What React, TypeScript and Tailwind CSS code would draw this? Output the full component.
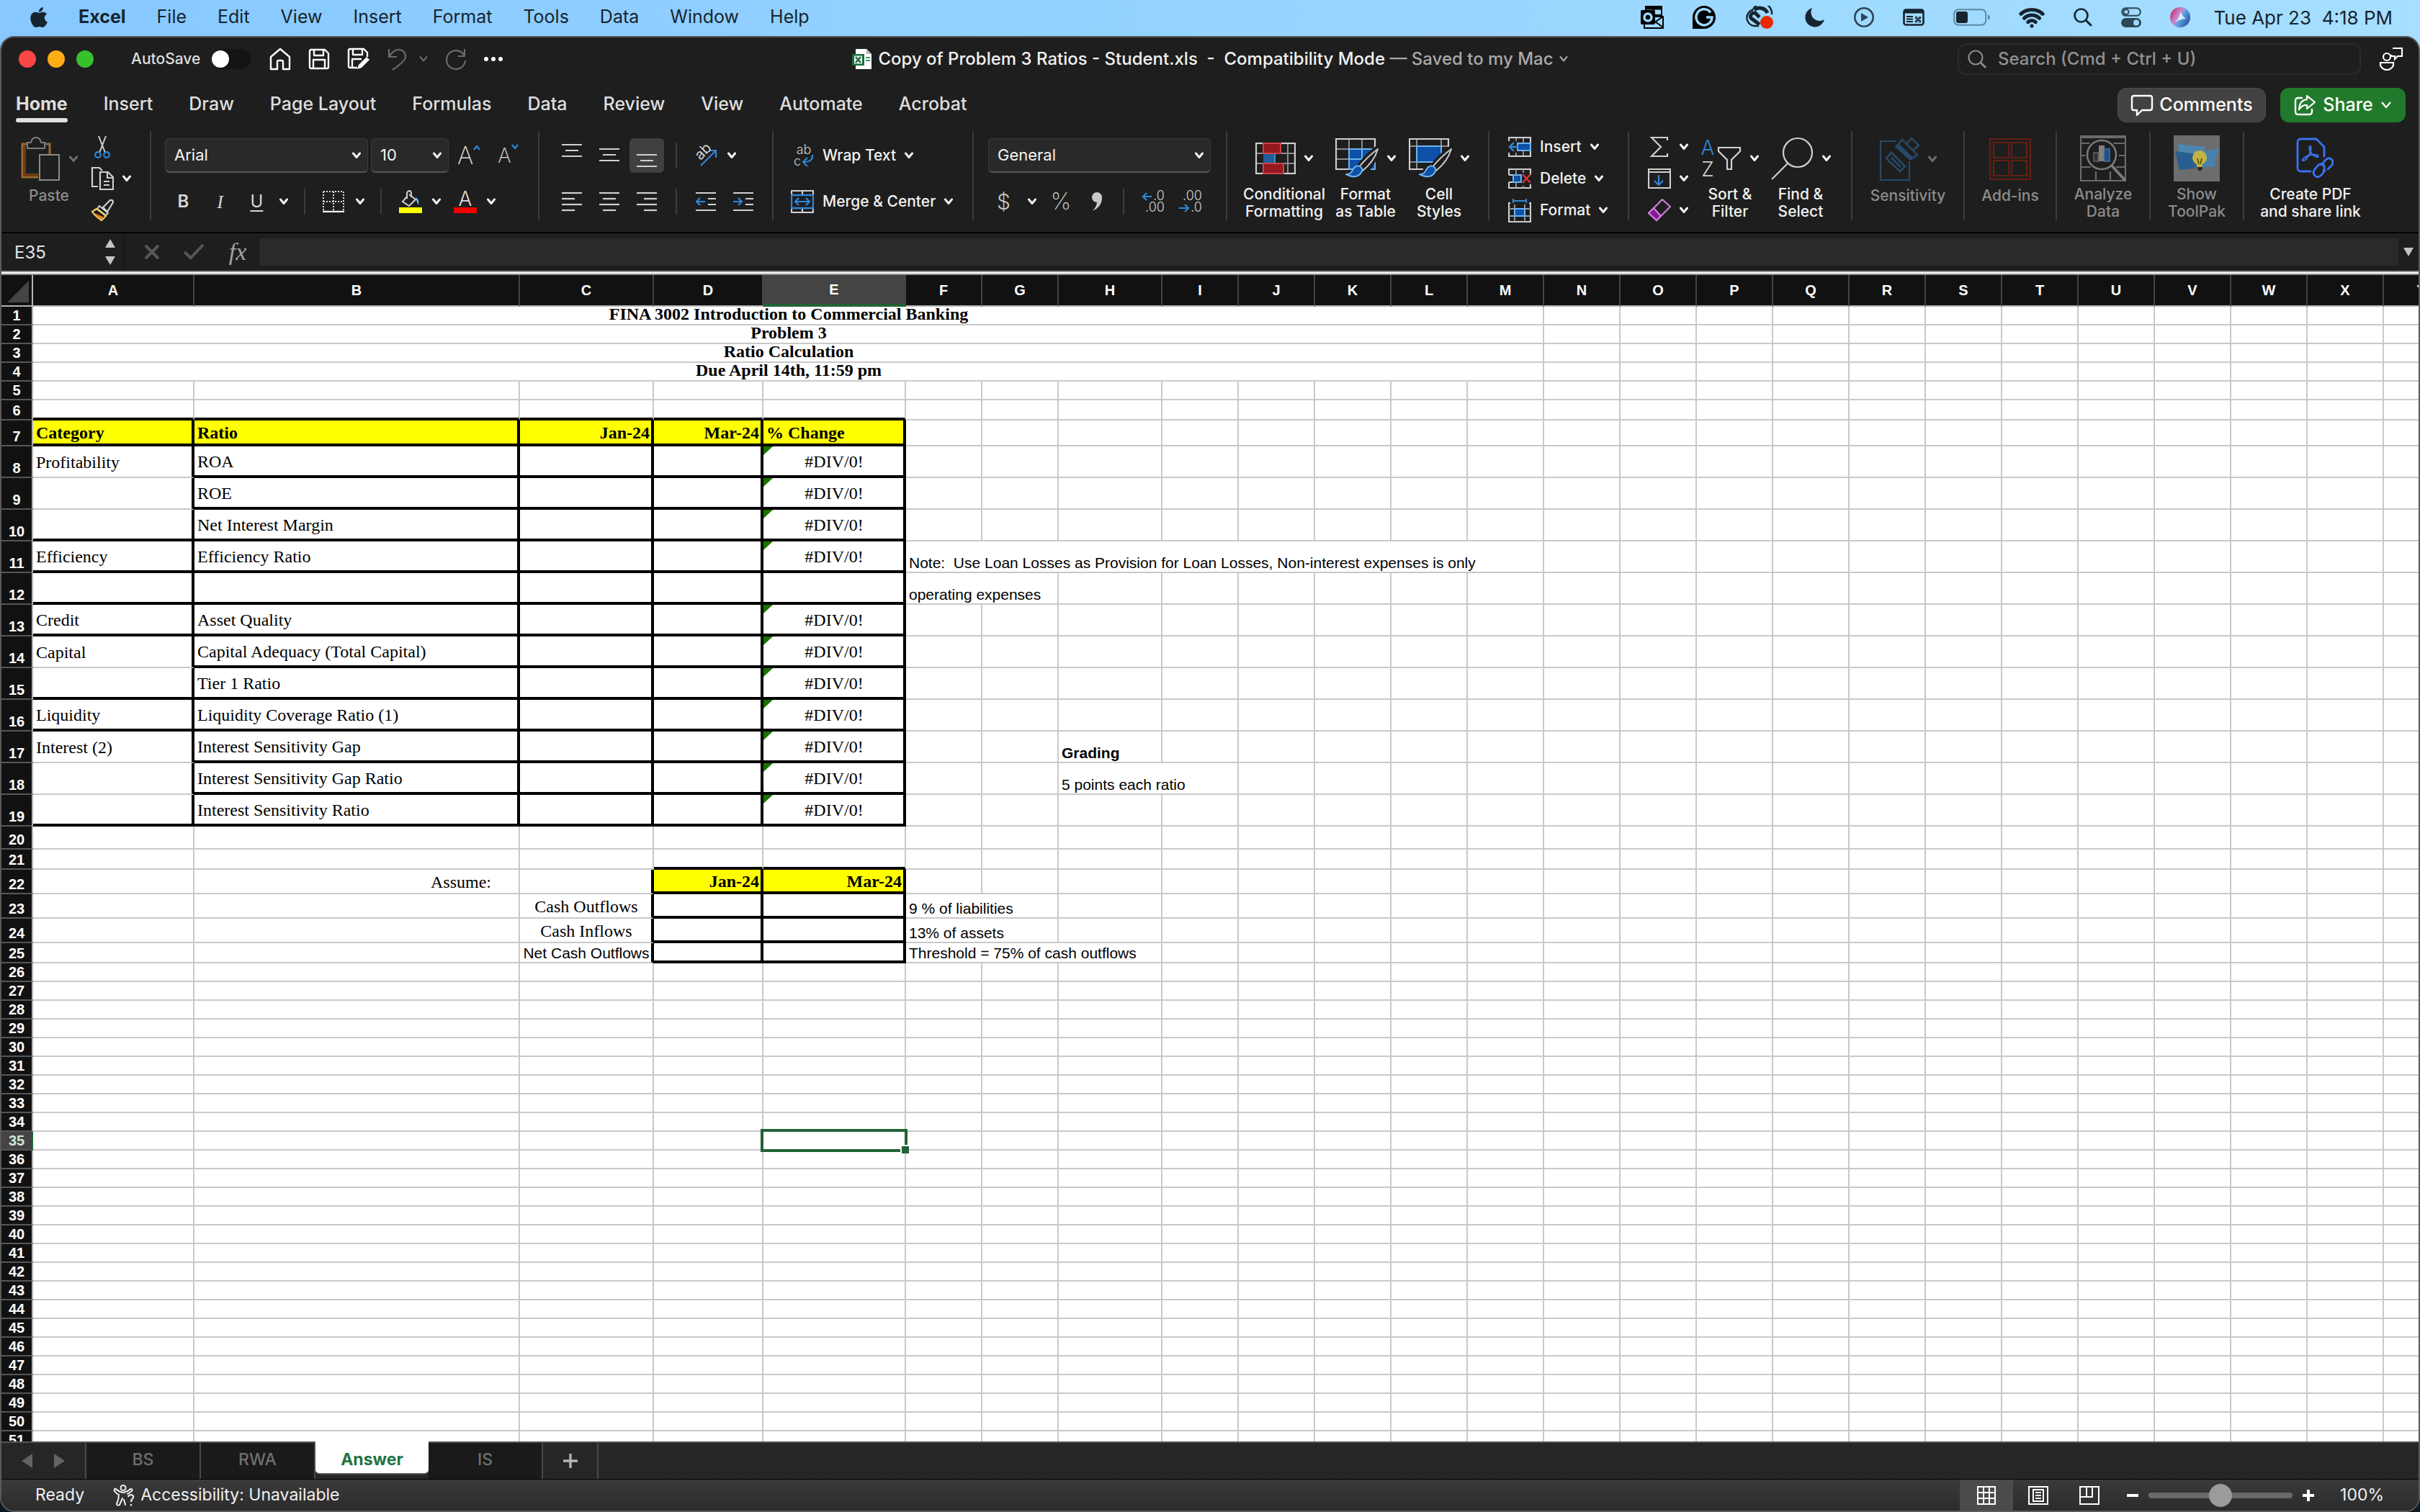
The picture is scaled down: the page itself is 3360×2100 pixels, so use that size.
import React from "react";
import { FaApple } from "react-icons/fa";
import { Command, Wifi } from "lucide-react";

type Kids = { children?: React.ReactNode };

const LIGHT = "#d0d0d0";
const BLUE = "#2f87d8";

function Svg({ w, h, children }: { w: number; h: number } & Kids) {
  return (
    <svg width={w} height={h} viewBox={`0 0 ${w} ${h}`} fill="none" aria-hidden="true" className="shrink-0">
      {children}
    </svg>
  );
}

function Chevron({ color = "#f2f2f2", thin = false }: { color?: string; thin?: boolean }) {
  return (
    <Svg w={12} h={10}>
      <path d="M1.5 2 L6 7.5 L10.5 2" stroke={color} strokeWidth={thin ? 2 : 3} strokeLinecap="round" strokeLinejoin="round" />
    </Svg>
  );
}

/* ---------- menu bar ---------- */

const menus = ["File", "Edit", "View", "Insert", "Format", "Tools", "Data", "Window", "Help"];

function MenuBar() {
  return (
    <header className="flex h-12 shrink-0 items-center justify-between px-[38px] text-[#16242f]">
      <nav className="flex items-center gap-[43px] text-[25px]">
        <button aria-label="Apple menu" className="-mr-1">
          <FaApple size={32} />
        </button>
        <button className="font-bold">Excel</button>
        {menus.map((m) => (
          <button key={m}>{m}</button>
        ))}
      </nav>
      <div className="flex items-center gap-10">
        <Svg w={32} h={32}>
          <rect x="7" y="1" width="22" height="22" stroke="#000" strokeWidth="2" />
          <path d="M7 3.5 H29" stroke="#000" strokeWidth="4" />
          <path d="M18 4 V22 M18 13 H29" stroke="#000" strokeWidth="2" />
          <path d="M5 15 L31 15 V31 H5 Z" fill="#9dd8ff" stroke="#000" strokeWidth="2" />
          <path d="M31 15 L18 24 M20 22 L31 30" stroke="#000" strokeWidth="2" />
          <rect x="0" y="6" width="20" height="20" rx="2" fill="#000" />
          <circle cx="10" cy="16" r="5" stroke="#9dd8ff" strokeWidth="3.5" />
        </Svg>
        <Svg w={32} h={32}>
          <path d="M16 0 A16 16 0 1 1 16 32 H0 V16 A16 16 0 0 1 16 0 Z" fill="#000" />
          <path d="M25 9.5 A11 11 0 1 0 27 16 H19 M26.5 16 V21" stroke="#9dd8ff" strokeWidth="3.5" />
        </Svg>
        <Svg w={42} h={32}>
          <path d="M20 28 H13 A11.5 11.5 0 0 1 12 5.5 M12 5.5 A13.5 13.5 0 0 1 38 12" stroke="#16242f" strokeWidth="2.4" />
          <path d="M21 26 L9 17 A5 5 0 0 1 15 10 L21 16 M14 5.5 A12 12 0 0 1 32 10" stroke="#16242f" strokeWidth="5" />
          <circle cx="31" cy="23" r="9" fill="#e92a00" />
        </Svg>
        <Svg w={30} h={30}>
          <path d="M12 2 A13.5 13.5 0 1 0 29 18 A12 12 0 0 1 12 2 Z" fill="#16242f" />
        </Svg>
        <Svg w={28} h={28}>
          <circle cx="14" cy="14" r="12.7" stroke="#2c4658" strokeWidth="2.6" />
          <path d="M10 8 L20 14 L10 20 Z" fill="#2c4658" />
        </Svg>
        <span className="relative flex">
          <Svg w={30} h={24}>
            <rect x="1.5" y="1.5" width="27" height="21" rx="3" stroke="#16242f" strokeWidth="2.6" />
            <path d="M1 4 H29" stroke="#16242f" strokeWidth="5" />
            <path d="M5 11 H14 M5 14.5 H14 M5 18 H14" stroke="#16242f" strokeWidth="1.8" />
          </Svg>
          <Command size={10} strokeWidth={3} className="absolute right-1 bottom-1" />
        </span>
        <Svg w={51} h={24}>
          <rect x="1.2" y="1.2" width="44" height="21.6" rx="6" stroke="#5b87a3" strokeWidth="2" />
          <rect x="4" y="4" width="16" height="16" rx="3" fill="#16242f" />
          <path d="M48 8 Q51 9.500 51 12 Q51 14.500 48 16 Z" fill="#5b87a3" />
        </Svg>
        <Wifi size={36} strokeWidth={3.4} />
        <Svg w={26} h={26}>
          <circle cx="10.5" cy="10.5" r="9" stroke="#16242f" strokeWidth="2.6" />
          <path d="M17 17 L24 24" stroke="#16242f" strokeWidth="3" strokeLinecap="round" />
        </Svg>
        <Svg w={28} h={28}>
          <rect x="1.2" y="1.2" width="25.6" height="10.6" rx="5.3" stroke="#2c4658" strokeWidth="2" />
          <circle cx="7" cy="6.5" r="3.5" stroke="#2c4658" strokeWidth="2" />
          <rect x="0" y="15" width="28" height="13" rx="6.5" fill="#2c4658" />
          <circle cx="21" cy="21.5" r="4" fill="#9dd8ff" />
        </Svg>
        <svg width="28" height="28" viewBox="0 0 28 28" aria-hidden="true">
          <defs>
            <linearGradient id="siri" x1="0" y1="0.2" x2="1" y2="0.8">
              <stop offset="0" stopColor="#c2306f" />
              <stop offset="0.4" stopColor="#c98ad0" />
              <stop offset="0.6" stopColor="#4aa0dd" />
              <stop offset="1" stopColor="#3a3f8e" />
            </linearGradient>
          </defs>
          <circle cx="14" cy="14" r="14" fill="url(#siri)" />
          <path d="M7 21 Q13 14 15 6 Q17 13 22 16 Q15 16 7 21 Z" fill="#e8f6ff" opacity="0.85" />
        </svg>
        <time className="-ml-2 text-[26px] whitespace-pre">Tue Apr 23  4:18 PM</time>
      </div>
    </header>
  );
}

/* ---------- title bar ---------- */

function TitleBar() {
  return (
    <div className="grid h-[60px] shrink-0 grid-cols-[1fr_auto_1fr] items-center">
      <div className="flex items-center pl-6">
        <div className="flex gap-4">
          <button aria-label="Close" className="size-6 rounded-full bg-[#fb4646]" />
          <button aria-label="Minimize" className="size-6 rounded-full bg-[#fdae15]" />
          <button aria-label="Full screen" className="size-6 rounded-full bg-[#36c22b]" />
        </div>
        <label className="ml-[52px] flex items-center gap-4 text-[21px] font-medium text-[#dcdcdc]">
          AutoSave
          <input
            type="checkbox"
            role="switch"
            className="h-7 w-[54px] appearance-none rounded-full bg-[#141414] before:block before:size-6 before:translate-y-0.5 before:rounded-full before:bg-white"
          />
        </label>
        <div className="ml-[26px] flex items-center gap-6">
          <button aria-label="Home">
            <Svg w={30} h={32}>
              <path d="M2 13 L15 2 L28 13 V30 H19 V20 Q19 18 17 18 H13 Q11 18 11 20 V30 H2 Z" stroke="#fff" strokeWidth="2.4" strokeLinejoin="round" />
            </Svg>
          </button>
          <button aria-label="Save">
            <Svg w={30} h={30}>
              <path d="M2 4 Q2 2 4 2 H23 L28 7 V26 Q28 28 26 28 H4 Q2 28 2 26 Z M8 2 V10 H21 V2 M7 28 V16 H23 V28" stroke="#fff" strokeWidth="2.4" strokeLinejoin="round" />
            </Svg>
          </button>
          <button aria-label="Save as">
            <Svg w={32} h={32}>
              <path d="M14 28 H4 Q2 28 2 26 V4 Q2 2 4 2 H23 L28 7 V13 M8 2 V10 H21 V2 M7 28 V16 H20" stroke="#fff" strokeWidth="2.4" strokeLinejoin="round" />
              <path d="M14 30 L16 24 L27 13 L31 17 L20 28 Z" fill="#fff" />
            </Svg>
          </button>
          <button aria-label="Undo" className="flex items-center gap-4">
            <Svg w={28} h={32}>
              <path d="M2 2 V13 H13 M2 13 Q9 2 17 3 Q26 5 25 14 Q23 20 7 31" stroke="#6a6a6a" strokeWidth="2.2" />
            </Svg>
            <Chevron color="#6a6a6a" thin />
          </button>
          <button aria-label="Redo">
            <Svg w={30} h={32}>
              <path d="M27 2 V12 H18 M27 12 A13 13 0 1 0 28 18" stroke="#6a6a6a" strokeWidth="2.2" />
            </Svg>
          </button>
          <button aria-label="More" className="flex gap-1">
            <span className="size-1.5 rounded-full bg-white" />
            <span className="size-1.5 rounded-full bg-white" />
            <span className="size-1.5 rounded-full bg-white" />
          </button>
        </div>
      </div>
      <div className="flex items-center text-2xl font-medium text-[#f1f1f1]">
        <Svg w={28} h={30}>
          <path d="M5 1 H20 L27 8 V29 H5 Z" fill="#fff" />
          <path d="M20 1 V8 H27 Z" fill="#bbb" />
          <path d="M19 13 H25 M19 17 H25" stroke="#2f9e5b" strokeWidth="2" />
          <rect x="0" y="8" width="17" height="16" fill="#1d6b3d" />
          <rect x="3" y="10.5" width="11" height="11" fill="#e6f3ea" />
          <path d="M5 12 L12 20 M12 12 L5 20" stroke="#1d6b3d" strokeWidth="2.4" />
        </Svg>
        <h1 className="ml-2 whitespace-pre">
          Copy of Problem 3 Ratios - Student.xls  -  Compatibility Mode{" "}
          <span className="text-[#a9a9a9]">— Saved to my Mac</span>
        </h1>
        <span className="ml-2">
          <Chevron color="#a9a9a9" thin />
        </span>
      </div>
      <div className="flex items-center justify-end gap-6 pr-[20px]">
        <label className="flex h-[44px] w-[560px] items-center gap-4 rounded-xl border-2 border-[#2b2b2b] px-3">
          <Svg w={26} h={26}>
            <circle cx="11" cy="11" r="9.5" stroke="#8c8c8c" strokeWidth="2.2" />
            <path d="M18 18 L25 25" stroke="#8c8c8c" strokeWidth="2.8" />
          </Svg>
          <input
            aria-label="Search"
            placeholder="Search (Cmd + Ctrl + U)"
            className="w-full bg-transparent text-2xl font-medium outline-none placeholder:text-[#909090]"
          />
        </label>
        <button aria-label="Account">
          <Svg w={36} h={34}>
            <circle cx="12" cy="14" r="5" stroke="#fff" strokeWidth="2.2" />
            <path d="M3 22 H21 V26 Q18 32 12 32 Q6 32 3 26 Z" stroke="#fff" strokeWidth="2.2" />
            <path d="M20 2 H33 V13 H27 L23 17 V13 H20 Q18 13 18 11" stroke="#fff" strokeWidth="2.2" />
          </Svg>
        </button>
      </div>
    </div>
  );
}

/* ---------- ribbon tabs ---------- */

const ribbonTabs = ["Insert", "Draw", "Page Layout", "Formulas", "Data", "Review", "View", "Automate", "Acrobat"];

function RibbonTabs() {
  return (
    <div className="flex h-[60px] shrink-0 justify-between pr-[18px] pl-5">
      <div role="tablist" className="flex gap-[50px] text-[25px] font-medium text-[#dedede]">
        <button role="tab" aria-selected="true" className="flex flex-col pt-4 font-bold">
          <span className="leading-8">Home</span>
          <span className="mt-1 h-1.5 w-full rounded-full bg-[#e0e0e0]" />
        </button>
        {ribbonTabs.map((t) => (
          <button key={t} role="tab" aria-selected="false" className="flex pt-4 leading-8 whitespace-nowrap">
            {t}
          </button>
        ))}
      </div>
      <div className="flex items-start gap-5 pt-2.5 text-[25px] font-medium text-white">
        <button className="flex h-12 w-[206px] items-center justify-center gap-2 rounded-xl border border-[#4c4c4c] bg-[#424242]">
          <Svg w={32} h={32}>
            <path d="M5 3 H27 Q30 3 30 6 V20 Q30 23 27 23 H16 L9 30 V23 H5 Q2 23 2 20 V6 Q2 3 5 3 Z" stroke="#fff" strokeWidth="2.4" strokeLinejoin="round" />
          </Svg>
          Comments
        </button>
        <button className="flex h-12 w-[174px] items-center justify-center gap-2.5 rounded-xl bg-[#217a2b]">
          <Svg w={30} h={30}>
            <path d="M11 5 H6 Q2 5 2 9 V24 Q2 28 6 28 H21 Q25 28 25 24 V21" stroke="#fff" strokeWidth="2.4" strokeLinecap="round" />
            <path d="M18 2 L29 11 L18 20 V15 Q12 14 7 21 Q8 8 18 7 Z" stroke="#fff" strokeWidth="2.2" strokeLinejoin="round" />
          </Svg>
          Share
          <Svg w={16} h={12}>
            <path d="M2 2 L8 9 L14 2" stroke="#fff" strokeWidth="2.2" />
          </Svg>
        </button>
      </div>
    </div>
  );
}

/* ---------- ribbon pieces ---------- */

function Group({ className, last = false, children }: { className: string; last?: boolean } & Kids) {
  return (
    <div className={`h-[124px] shrink-0 ${last ? "" : "border-r-2 border-[#3c3c3c]"} ${className}`}>{children}</div>
  );
}

function TwoRows({ top, bottom }: { top: React.ReactNode; bottom: React.ReactNode }) {
  return (
    <div className="flex flex-col gap-4 pt-2.5">
      <div className="flex h-12 items-center">{top}</div>
      <div className="flex h-12 items-center">{bottom}</div>
    </div>
  );
}

function Divider() {
  return <span className="h-9 w-0.5 bg-[#3c3c3c]" />;
}

function BigButton({
  icon,
  lines,
  className,
  arrow = false,
  dim = false,
}: {
  icon: React.ReactNode;
  lines: string[];
  className: string;
  arrow?: boolean;
  dim?: boolean;
}) {
  return (
    <button className={`flex flex-col items-center ${className}`}>
      <span className="flex h-[78px] items-center gap-3">
        {icon}
        {arrow && <Chevron color={dim ? "#6d6d6d" : "#f2f2f2"} />}
      </span>
      <span className={`text-[21px] leading-6 font-medium whitespace-nowrap ${dim ? "text-[#8c8c8c]" : "text-[#f2f2f2]"}`}>
        {lines.map((l) => (
          <span key={l} className="block">
            {l}
          </span>
        ))}
      </span>
    </button>
  );
}

function Dropdown({ label, value, className }: { label: string; value: string; className: string }) {
  return (
    <span className={`relative flex h-12 items-center ${className}`}>
      <select
        aria-label={label}
        defaultValue={value}
        className="h-12 w-full appearance-none rounded-md border border-b-2 border-[#3b3b3b] border-b-[#565656] bg-[#292929] pl-3 text-[22px] text-[#f2f2f2]"
      >
        <option>{value}</option>
      </select>
      <span className="pointer-events-none absolute right-2.5">
        <Chevron />
      </span>
    </span>
  );
}

function Lines({ rows }: { rows: [number, number, number][] }) {
  return (
    <Svg w={28} h={32}>
      {rows.map(([x, y, w]) => (
        <path key={y} d={`M${x} ${y} H${x + w}`} stroke={LIGHT} strokeWidth="2.2" />
      ))}
    </Svg>
  );
}

function Brush() {
  return (
    <>
      <path d="M59 14 Q42 26 32 42 L40 48 Q54 32 59 14 Z" fill="#1e1e1e" stroke="#1e1e1e" strokeWidth="8" />
      <path d="M59 15 Q44 26 33 40 L38 45 Q54 32 59 15 Z" fill="#1e1e1e" stroke="#c8c8c8" strokeWidth="2" strokeLinejoin="round" />
      <path d="M15 50 Q22 50 24 44 Q28 37 34 39 Q40 43 35 49 Q28 57 15 50 Z" fill="#0f50a8" stroke="#6fb3ef" strokeWidth="2" strokeLinejoin="round" />
    </>
  );
}

function ClipboardGroup() {
  return (
    <Group className="flex w-[208px] pl-4">
      <BigButton
        className="w-[100px]"
        dim
        arrow
        lines={["Paste"]}
        icon={
          <Svg w={56} h={62}>
            <path d="M9 10 H3 V56 H25 M31 10 H41 V24" stroke="#9a6a33" strokeWidth="3" />
            <path d="M6 12 V53 H25" stroke="#6b3d12" strokeWidth="4" />
            <path d="M10 8 H15 Q16 1 22 1 Q28 1 29 8 H34 V16 H10 Z" fill="#1e1e1e" stroke="#7d7d7d" strokeWidth="2" />
            <rect x="27" y="25" width="27" height="35" fill="#1e1e1e" stroke="#8a8a8a" strokeWidth="2" />
          </Svg>
        }
      />
      <div className="ml-2 flex flex-col">
        <button aria-label="Cut" className="flex h-11 w-8 shrink-0 items-center justify-center">
          <Svg w={22} h={34}>
            <path d="M6 2 L15 25 M16 2 L7 25" stroke={LIGHT} strokeWidth="2" />
            <circle cx="5" cy="28" r="3.8" stroke={BLUE} strokeWidth="2.2" />
            <circle cx="17" cy="28" r="3.8" stroke={BLUE} strokeWidth="2.2" />
          </Svg>
        </button>
        <button aria-label="Copy" className="flex h-11 shrink-0 items-center gap-3">
          <Svg w={32} h={34}>
            <path d="M10 28 H2 V2 H12 L16 6" stroke={LIGHT} strokeWidth="2.2" />
            <path d="M13 8 H24 L31 15 V32 H13 Z M23 8 V16 H31" stroke={LIGHT} strokeWidth="2.2" />
            <path d="M18 21 H26 M18 26 H26" stroke={LIGHT} strokeWidth="1.8" />
          </Svg>
          <Chevron />
        </button>
        <button aria-label="Format painter" className="flex h-11 shrink-0 items-center">
          <Svg w={34} h={32}>
            <path d="M17 12 L27 2 Q31 1 31 5 L23 18 Z" stroke={LIGHT} strokeWidth="2.2" strokeLinejoin="round" />
            <path d="M12 10 L24 20 L21 23 L9 14 Z" stroke={LIGHT} strokeWidth="2" />
            <path d="M8 14 L21 24 L15 30 Q6 24 2 18 Z" stroke="#f5cf6a" strokeWidth="2.2" strokeLinejoin="round" />
            <path d="M5 20 L17 25 L15 29 Q8 25 5 20 Z" fill="#e8820c" />
          </Svg>
        </button>
      </div>
    </Group>
  );
}

function FontGroup() {
  return (
    <Group className="w-[539px] pl-[19px]">
      <TwoRows
        top={
          <>
            <Dropdown label="Font" value="Arial" className="w-[282px]" />
            <Dropdown label="Font size" value="10" className="ml-1 w-[108px]" />
            <button aria-label="Increase font size" className="ml-3 flex items-start text-[34px] leading-8 font-extralight text-[#dcdcdc]">
              A
              <Svg w={10} h={10}>
                <path d="M1 8 L5 3 L9 8" stroke={BLUE} strokeWidth="2.2" />
              </Svg>
            </button>
            <button aria-label="Decrease font size" className="ml-6 flex items-start text-[28px] leading-9 font-extralight text-[#dcdcdc]">
              A
              <Svg w={10} h={10}>
                <path d="M1 3 L5 8 L9 3" stroke={BLUE} strokeWidth="2.2" />
              </Svg>
            </button>
          </>
        }
        bottom={
          <>
            <button aria-label="Bold" className="w-[51px] text-2xl font-semibold text-[#d6d6d6]">B</button>
            <button aria-label="Italic" className="w-[51px] font-['Liberation_Serif'] text-[26px] text-[#d6d6d6] italic">I</button>
            <button aria-label="Underline" className="w-[51px] text-2xl text-[#d6d6d6] underline underline-offset-4">U</button>
            <span className="flex w-6 justify-center"><Chevron /></span>
            <span className="mx-4 flex"><Divider /></span>
            <button aria-label="Borders" className="ml-2 flex items-center gap-4">
              <Svg w={30} h={30}>
                <path d="M1 1 H29 M1 15 H29 M1 1 V27 M29 1 V27 M15 1 V27" stroke="#e0e0e0" strokeWidth="2" strokeDasharray="2 2" />
                <path d="M0 29 H30" stroke="#fff" strokeWidth="2.4" />
              </Svg>
              <Chevron />
            </button>
            <span className="ml-[22px] flex"><Divider /></span>
            <button aria-label="Fill color" className="ml-6 flex items-center gap-3.5">
              <Svg w={32} h={32}>
                <path d="M11 9 L5 16 L14 22 L23 13 L14 6 M11 12 V4 Q12 1 15 1 Q17 2 17 5 V10" stroke={LIGHT} strokeWidth="2" />
                <path d="M23 10 Q29 13 27 21 Q25 17 24 14 Z" fill="#6fb3ef" />
                <rect y="24" width="32" height="8" fill="#ffff00" />
              </Svg>
              <Chevron />
            </button>
            <button aria-label="Font color" className="ml-[18px] flex items-center gap-3.5">
              <span className="flex h-8 w-8 flex-col items-center justify-between text-[28px] leading-6 font-light text-[#dcdcdc]">
                A
                <span className="h-2 w-8 bg-[#f60000]" />
              </span>
              <Chevron />
            </button>
          </>
        }
      />
    </Group>
  );
}

function AlignGroup() {
  return (
    <Group className="w-[325px] pl-[21px]">
      <TwoRows
        top={
          <>
            <div className="flex gap-1">
              <button aria-label="Top align" className="flex size-12 items-center justify-center">
                <Lines rows={[[0, 1, 28], [5, 9, 18], [0, 17, 28]]} />
              </button>
              <button aria-label="Middle align" className="flex size-12 items-center justify-center">
                <Lines rows={[[0, 7, 28], [5, 15, 18], [0, 23, 28]]} />
              </button>
              <button aria-label="Bottom align" className="flex size-12 items-center justify-center rounded-md bg-[#404040]">
                <Lines rows={[[0, 15, 28], [5, 23, 18], [0, 31, 28]]} />
              </button>
            </div>
            <span className="ml-4 flex"><Divider /></span>
            <button aria-label="Orientation" className="ml-6 flex items-center gap-3.5">
              <span className="relative flex">
                <Svg w={32} h={32}>
                  <path d="M9 30 L29 10 M20 9 H30 V19" stroke={BLUE} strokeWidth="2.2" />
                </Svg>
                <span className="absolute top-0 left-0 -rotate-45 text-xl leading-5 text-[#d0d0d0]">ab</span>
              </span>
              <Chevron />
            </button>
          </>
        }
        bottom={
          <>
            <div className="flex gap-1">
              <button aria-label="Align left" className="flex size-12 items-center justify-center">
                <Lines rows={[[0, 4, 28], [0, 12, 18], [0, 20, 28], [0, 28, 18]]} />
              </button>
              <button aria-label="Align center" className="flex size-12 items-center justify-center">
                <Lines rows={[[0, 4, 28], [5, 12, 18], [0, 20, 28], [5, 28, 18]]} />
              </button>
              <button aria-label="Align right" className="flex size-12 items-center justify-center">
                <Lines rows={[[0, 4, 28], [10, 12, 18], [0, 20, 28], [10, 28, 18]]} />
              </button>
            </div>
            <span className="ml-4 flex"><Divider /></span>
            <button aria-label="Decrease indent" className="ml-3.5 flex w-[52px] justify-center">
              <Svg w={28} h={32}>
                <path d="M0 4 H28 M17 12 H28 M17 20 H28 M0 28 H28" stroke={LIGHT} strokeWidth="2.2" />
                <path d="M13 16 H1 M6 11 L1 16 L6 21" stroke={BLUE} strokeWidth="2.2" />
              </Svg>
            </button>
            <button aria-label="Increase indent" className="flex w-[52px] justify-center">
              <Svg w={28} h={32}>
                <path d="M0 4 H28 M17 12 H28 M17 20 H28 M0 28 H28" stroke={LIGHT} strokeWidth="2.2" />
                <path d="M0 16 H12 M7 11 L12 16 L7 21" stroke={BLUE} strokeWidth="2.2" />
              </Svg>
            </button>
          </>
        }
      />
    </Group>
  );
}

function WrapGroup() {
  return (
    <Group className="w-[278px] pl-6">
      <TwoRows
        top={
          <button className="flex items-center gap-3 text-[21px] font-medium text-[#f2f2f2]">
            <span className="relative flex h-8 w-8 flex-col pl-1 text-lg leading-4 font-light text-[#d0d0d0]">
              <span aria-hidden="true">ab</span>
              <span aria-hidden="true" className="text-left">c</span>
              <span className="absolute right-0 bottom-0">
                <Svg w={18} h={18}>
                  <path d="M16 1 Q17 11 4 11 M9 5 L3 11 L9 17" stroke={BLUE} strokeWidth="2.2" />
                </Svg>
              </span>
            </span>
            Wrap Text
            <Chevron />
          </button>
        }
        bottom={
          <button className="flex items-center gap-3 text-[21px] font-medium text-[#f2f2f2]">
            <Svg w={32} h={32}>
              <path d="M1 1 H31 V31 H1 Z M16 1 V7 M16 25 V31" stroke={LIGHT} strokeWidth="2.2" />
              <rect x="1" y="7" width="30" height="18" fill="#1e1e1e" stroke={BLUE} strokeWidth="2.4" />
              <path d="M6 16 H26 M11 11 L6 16 L11 21 M21 11 L26 16 L21 21" stroke={BLUE} strokeWidth="2.2" />
            </Svg>
            Merge &amp; Center
            <Chevron />
          </button>
        }
      />
    </Group>
  );
}

function NumberGroup() {
  return (
    <Group className="w-[352px] pl-5">
      <TwoRows
        top={<Dropdown label="Number format" value="General" className="w-[309px]" />}
        bottom={
          <>
            <button aria-label="Currency" className="flex items-center gap-6 pl-3 text-[30px] font-light text-[#c8c8c8]">
              $
              <Chevron />
            </button>
            <button aria-label="Percent" className="ml-4 w-9 text-[32px] font-extralight text-[#d0d0d0]">%</button>
            <button aria-label="Comma style" className="ml-6 flex">
              <Svg w={16} h={26}>
                <path d="M8 0 A7 7 0 0 1 15 8 Q15 20 2 26 Q8 19 8 14 A7 7 0 0 1 8 0 Z" fill="#c8c8c8" />
              </Svg>
            </button>
            <span className="ml-7 flex"><Divider /></span>
            <button aria-label="Increase decimal" className="relative ml-6 w-8 text-right text-lg leading-4 font-light text-[#d0d0d0]">
              <span className="block">.0</span>
              <span className="block">.00</span>
              <span className="absolute top-0.5 left-0">
                <Svg w={16} h={14}>
                  <path d="M14 7 H2 M7 2 L2 7 L7 12" stroke={BLUE} strokeWidth="2.2" />
                </Svg>
              </span>
            </button>
            <button aria-label="Decrease decimal" className="relative ml-5 w-8 text-right text-lg leading-4 font-light text-[#d0d0d0]">
              <span className="block">.00</span>
              <span className="block">.0</span>
              <span className="absolute bottom-0 left-0">
                <Svg w={16} h={14}>
                  <path d="M0 7 H13 M8 2 L13 7 L8 12" stroke={BLUE} strokeWidth="2.2" />
                </Svg>
              </span>
            </button>
          </>
        }
      />
    </Group>
  );
}

function StylesGroup() {
  return (
    <Group className="flex w-[364px] pl-5">
      <BigButton
        className="w-[118px]"
        arrow
        lines={["Conditional", "Formatting"]}
        icon={
          <Svg w={56} h={44}>
            <path d="M1 15 H55 M1 29 H55 M45 1 V43" stroke="#8b8b8b" strokeWidth="2" />
            <rect x="1" y="1" width="54" height="42" stroke={LIGHT} strokeWidth="2.2" />
            <rect x="29" y="16" width="15" height="12" fill="#1e1e1e" />
            <rect x="11" y="1" width="24" height="14" fill="#921920" stroke="#cf4248" strokeWidth="2" />
            <rect x="11" y="16" width="16" height="12" fill="#1f5c99" />
            <path d="M27 16 V28" stroke="#3492c8" strokeWidth="2" />
            <rect x="11" y="29" width="28" height="14" fill="#921920" stroke="#cf4248" strokeWidth="2" />
          </Svg>
        }
      />
      <BigButton
        className="w-[108px]"
        arrow
        lines={["Format", "as Table"]}
        icon={
          <Svg w={60} h={56}>
            <path d="M1 15 H55 M1 29 H19 M19 1 V43 M37 1 V15" stroke="#8b8b8b" strokeWidth="2" />
            <path d="M19 43 H1 V1 H55 V15" stroke={LIGHT} strokeWidth="2.2" />
            <path d="M19 15 H55 V43 H19 Z" fill="#0f50a8" stroke="#6fb3ef" strokeWidth="2" />
            <path d="M37 15 V43 M19 29 H55" stroke="#6fb3ef" strokeWidth="2" />
            <Brush />
          </Svg>
        }
      />
      <BigButton
        className="w-[96px]"
        arrow
        lines={["Cell", "Styles"]}
        icon={
          <Svg w={60} h={56}>
            <path d="M1 11 H55 M1 33 H12 M11 1 V43 M45 1 V11" stroke="#8b8b8b" strokeWidth="2" />
            <path d="M20 43 H1 V1 H55 V12" stroke={LIGHT} strokeWidth="2.2" />
            <rect x="11" y="11" width="34" height="22" fill="#0f50a8" stroke="#6fb3ef" strokeWidth="2" />
            <Brush />
          </Svg>
        }
      />
    </Group>
  );
}

function CellButton({ icon, label }: { icon: React.ReactNode; label: string }) {
  return (
    <button className="flex h-11 shrink-0 items-center gap-3 text-[21px] font-medium text-[#f2f2f2]">
      {icon}
      {label}
      <Chevron />
    </button>
  );
}

function CellsGroup() {
  return (
    <Group className="flex w-[194px] flex-col pl-[26px]">
      <CellButton
        label="Insert"
        icon={
          <Svg w={32} h={28}>
            <path d="M11 1 V27 M21 1 V27 M1 9 H31 M1 19 H31" stroke="#9a9a9a" strokeWidth="1.8" />
            <rect x="1" y="1" width="30" height="26" stroke={LIGHT} strokeWidth="2.2" />
            <rect x="0" y="6" width="16" height="16" fill="#1e1e1e" />
            <rect x="13" y="9" width="18" height="10" fill="#0f50a8" stroke="#6fb3ef" strokeWidth="2" />
            <path d="M14 14 H2 M8 8 L2 14 L8 20" stroke={BLUE} strokeWidth="2.4" />
          </Svg>
        }
      />
      <CellButton
        label="Delete"
        icon={
          <Svg w={32} h={28}>
            <path d="M1 9 V1 H31 V9 M1 9 H9 M1 19 H9 M1 19 V27 H31 V22" stroke={LIGHT} strokeWidth="2.2" />
            <path d="M11 1 V8 M21 1 V6 M11 20 V27 M21 24 V27" stroke="#9a9a9a" strokeWidth="1.8" />
            <rect x="7" y="9" width="11" height="10" fill="#0f50a8" stroke="#6fb3ef" strokeWidth="2" />
            <path d="M20 8 L31 20 M31 8 L20 20" stroke="#e0313c" strokeWidth="2.4" />
          </Svg>
        }
      />
      <CellButton
        label="Format"
        icon={
          <Svg w={32} h={34}>
            <path d="M7 1 V7 M25 1 V7 M7 4 H25" stroke={BLUE} strokeWidth="2.2" />
            <path d="M3 7 H1 V33 H31 V7 H29" stroke={LIGHT} strokeWidth="2.2" />
            <path d="M9 9 V33 M23 9 V33 M1 15 H31 M1 25 H31" stroke="#9a9a9a" strokeWidth="1.8" />
            <rect x="9" y="15" width="14" height="10" fill="#0f50a8" stroke="#6fb3ef" strokeWidth="2" />
          </Svg>
        }
      />
    </Group>
  );
}

function EditGroup() {
  return (
    <Group className="flex w-[310px] pl-[26px]">
      <div className="mr-2 flex flex-col">
        <button aria-label="AutoSum" className="flex h-11 shrink-0 items-center gap-3">
          <Svg w={32} h={28}>
            <path d="M27 5 V1 H5 L18 14 L5 27 H27 V23" stroke={LIGHT} strokeWidth="2.2" />
          </Svg>
          <Chevron />
        </button>
        <button aria-label="Fill" className="flex h-11 shrink-0 items-center gap-3">
          <Svg w={32} h={28}>
            <path d="M1 1 H31 V27 H1 Z M1 5 H31" stroke={LIGHT} strokeWidth="2.2" />
            <path d="M15 9 V23 M9 17 L15 23 L21 17" stroke={BLUE} strokeWidth="2.2" />
          </Svg>
          <Chevron />
        </button>
        <button aria-label="Clear" className="flex h-11 shrink-0 items-center gap-3">
          <Svg w={32} h={32}>
            <path d="M20 1 L31 11 L12 30 L1 20 Z" stroke="#cf7fd8" strokeWidth="2.2" />
            <path d="M8 13 L18 24 L12 30 L1 20 Z" fill="#881798" stroke="#cf7fd8" strokeWidth="2.2" />
          </Svg>
          <Chevron />
        </button>
      </div>
      <BigButton
        className="w-[100px]"
        arrow
        lines={["Sort &", "Filter"]}
        icon={
          <span className="flex items-center">
            <span className="flex flex-col items-center text-[28px] leading-[30px] font-light">
              <span aria-hidden="true" className="text-[#2f87d8]">A</span>
              <span aria-hidden="true" className="text-[#d0d0d0]">Z</span>
            </span>
            <span className="ml-1">
              <Svg w={34} h={34}>
                <path d="M2 2 H32 V7 L20 19 V32 H14 V19 L2 7 Z" stroke={LIGHT} strokeWidth="2.2" />
              </Svg>
            </span>
          </span>
        }
      />
      <BigButton
        className="w-[96px]"
        arrow
        lines={["Find &", "Select"]}
        icon={
          <Svg w={60} h={60}>
            <circle cx="38" cy="22" r="20" stroke={LIGHT} strokeWidth="2.2" />
            <path d="M24 37 L2 59" stroke={LIGHT} strokeWidth="2.2" />
          </Svg>
        }
      />
    </Group>
  );
}

function ExtraGroups() {
  return (
    <>
      <Group className="flex w-[156px] justify-center">
        <BigButton
          className="w-[120px]"
          arrow
          dim
          lines={["Sensitivity"]}
          icon={
            <Svg w={56} h={62}>
              <path d="M24 6 H2 V60 H42 V34" stroke="#28496a" strokeWidth="2.2" />
              <path d="M10 30 L17 22 L36 41 L29 48 Z M17 29 L30 42" stroke="#28496a" strokeWidth="2.6" />
              <path d="M24 14 L32 4 L53 25 L45 31 Z M38 10 L45 2 L55 12 L47 19" stroke="#28496a" strokeWidth="2.4" />
              <path d="M24 14 L27 11 L45 29 L43 31 Z" fill="#28496a" stroke="#28496a" strokeWidth="3" />
            </Svg>
          }
        />
      </Group>
      <Group className="flex w-[128px] justify-center">
        <BigButton
          className="w-[110px]"
          dim
          lines={["Add-ins"]}
          icon={
            <Svg w={58} h={58}>
              <path d="M1 1 H57 V57 H1 Z M6 6 H27 V27 H6 Z M31 6 H52 V27 H31 Z M6 31 H27 V52 H6 Z M31 31 H52 V52 H31 Z" stroke="#641f14" strokeWidth="2.2" />
            </Svg>
          }
        />
      </Group>
      <Group className="flex w-[130px] justify-center">
        <BigButton
          className="w-[110px]"
          dim
          lines={["Analyze", "Data"]}
          icon={
            <Svg w={64} h={64}>
              <path d="M0 2 H64" stroke="#6b6b6b" strokeWidth="4" />
              <path d="M1 1 H63 V63 H1 Z M1 11 H63 M1 28 H10 M54 28 H63 M1 44 H18 M50 44 H63 M22 50 V63 M42 50 V63" stroke="#6b6b6b" strokeWidth="2.2" />
              <circle cx="30" cy="27" r="23" fill="#1e1e1e" />
              <circle cx="30" cy="27" r="20" stroke="#7a7a7a" strokeWidth="2.6" />
              <rect x="19" y="24" width="6" height="12" fill="#333" stroke="#555" strokeWidth="2" />
              <rect x="26" y="14" width="8" height="22" fill="#808080" />
              <rect x="34" y="19" width="7" height="17" fill="#1f4f85" stroke="#39658f" strokeWidth="2" />
              <path d="M44 42 L63 63" stroke="#7a7a7a" strokeWidth="4" />
            </Svg>
          }
        />
      </Group>
      <Group className="flex w-[130px] justify-center">
        <BigButton
          className="w-[110px]"
          dim
          lines={["Show", "ToolPak"]}
          icon={
            <Svg w={64} h={64}>
              <rect width="64" height="64" fill="#6d6d6d" />
              <path d="M6 12 L44 16 L40 40 L8 34 Z" fill="#4f86ad" />
              <path d="M2 22 L34 26 L30 46 L8 48 Z" fill="#285f90" />
              <path d="M34 24 L62 18 L56 44 L32 44 Z" fill="#4a82ae" />
              <circle cx="36" cy="31" r="10" fill="#c2b342" />
              <path d="M31 36 H41 L39 44 H33 Z" fill="#c2b342" />
              <path d="M33 32 L35 40 M39 32 L37 40" stroke="#4d4514" strokeWidth="1.5" />
              <path d="M33 44 H40 V47 L36 50 L33 47 Z" fill="#2c2c2c" />
            </Svg>
          }
        />
      </Group>
      <Group last className="flex w-[184px] justify-center">
        <BigButton
          className="w-[176px]"
          lines={["Create PDF", "and share link"]}
          icon={
            <span className="ml-3 flex">
              <Svg w={52} h={58}>
                <path d="M20 47 H7 Q2 47 2 42 V7 Q2 2 7 2 H28 L39 13 V26" stroke="#3b73f0" strokeWidth="2.8" strokeLinejoin="round" strokeLinecap="round" />
                <path d="M9 32 Q8 29 17 25 Q29 22 31 26 Q30 29 23 24 Q16 16 19 12 Q22 12 20 19 Q15 33 9 32 Z" stroke="#3b73f0" strokeWidth="2" />
                <path d="M35 38 L41 31 Q45 27 49 30 Q53 34 49 39 L44 44 M37 36 Q41 41 38 46 M31 38 L26 44 Q22 49 26 53 Q31 57 35 52 L40 46 M31 38 Q35 35 38 39" stroke="#3b73f0" strokeWidth="2.8" strokeLinecap="round" />
              </Svg>
            </span>
          }
        />
      </Group>
    </>
  );
}

function Ribbon() {
  return (
    <div className="flex h-[150px] shrink-0 overflow-hidden pt-2.5">
      <ClipboardGroup />
      <FontGroup />
      <AlignGroup />
      <WrapGroup />
      <NumberGroup />
      <StylesGroup />
      <CellsGroup />
      <EditGroup />
      <ExtraGroups />
    </div>
  );
}

/* ---------- formula bar ---------- */

function FormulaBar() {
  return (
    <div className="flex h-[54px] shrink-0 items-center border-t-2 border-black">
      <input
        aria-label="Name box"
        defaultValue="E35"
        className="h-full w-[142px] bg-transparent pl-[18px] text-2xl text-[#e3e3e3] outline-none"
      />
      <Svg w={18} h={36}>
        <path d="M9 0 L16 12 H2 Z M9 36 L16 24 H2 Z" fill="#c3c3c3" />
      </Svg>
      <span className="ml-2 h-full w-1 bg-[#191919]" />
      <button aria-label="Cancel" className="ml-[25px] flex">
        <Svg w={24} h={24}>
          <path d="M3 3 L21 21 M21 3 L3 21" stroke="#575757" strokeWidth="4" />
        </Svg>
      </button>
      <button aria-label="Enter" className="ml-[31px] flex">
        <Svg w={30} h={24}>
          <path d="M2 12 L11 20 L28 2" stroke="#575757" strokeWidth="4" />
        </Svg>
      </button>
      <button aria-label="Insert function" className="ml-7 w-9 font-['Liberation_Serif'] text-[34px] leading-9 text-[#a3a3a3] italic">
        fx
      </button>
      <input aria-label="Formula bar" className="ml-3 h-[38px] min-w-0 flex-1 bg-[#2a2a2a] text-white outline-none" />
      <button aria-label="Expand formula bar" className="flex w-7 justify-center">
        <Svg w={14} h={12}>
          <path d="M0 0 H14 L7 12 Z" fill="#c3c3c3" />
        </Svg>
      </button>
    </div>
  );
}

/* ---------- sheet ---------- */

const columns: [string, string][] = [
  ["A", "w-[224px]"],
  ["B", "w-[452px]"],
  ["C", "w-[186px]"],
  ["D", "w-[152px]"],
  ["E", "w-[198px]"],
  ["F", "w-[106px]"],
  ["G", "w-[106px]"],
  ["H", "w-[144px]"],
  ..."IJKLMNOPQRSTUVWXY".split("").map((c): [string, string] => [c, "w-[106px]"]),
];

type Cell = { v: string; cls: string; span?: number };

const serif = "font-['Liberation_Serif'] text-2xl leading-6 pt-0.5";
const sans = "text-[21px] leading-6 align-bottom";
const ratios: [number, string, string][] = [
  [8, "Profitability", "ROA"],
  [9, "", "ROE"],
  [10, "", "Net Interest Margin"],
  [11, "Efficiency", "Efficiency Ratio"],
  [13, "Credit", "Asset Quality"],
  [14, "Capital", "Capital Adequacy (Total Capital)"],
  [15, "", "Tier 1 Ratio"],
  [16, "Liquidity", "Liquidity Coverage Ratio (1)"],
  [17, "Interest (2)", "Interest Sensitivity Gap"],
  [18, "", "Interest Sensitivity Gap Ratio"],
  [19, "", "Interest Sensitivity Ratio"],
];

const title = "font-['Liberation_Serif'] text-2xl leading-5 font-bold text-center align-top";
const head = `${serif} bg-[#ffff00] font-bold`;

const cells: Record<string, Cell> = {
  A1: { v: "FINA 3002 Introduction to Commercial Banking", cls: title, span: 13 },
  A2: { v: "Problem 3", cls: title, span: 13 },
  A3: { v: "Ratio Calculation", cls: title, span: 13 },
  A4: { v: "Due April 14th, 11:59 pm", cls: title, span: 13 },
  A7: { v: "Category", cls: head },
  B7: { v: "Ratio", cls: head },
  C7: { v: "Jan-24", cls: `${head} text-right` },
  D7: { v: "Mar-24", cls: `${head} text-right` },
  E7: { v: "% Change", cls: head },
  F11: {
    v: "Note:  Use Loan Losses as Provision for Loan Losses, Non-interest expenses is only",
    cls: sans,
    span: 8,
  },
  F12: { v: "operating expenses", cls: sans, span: 2 },
  H17: { v: "Grading", cls: `${sans} font-bold` },
  H18: { v: "5 points each ratio", cls: sans, span: 2 },
  B22: { v: "Assume:", cls: `${serif} text-right pr-[38px]` },
  D22: { v: "Jan-24", cls: `${head} text-right` },
  E22: { v: "Mar-24", cls: `${head} text-right` },
  C23: { v: "Cash Outflows", cls: `${serif} text-center` },
  C24: { v: "Cash Inflows", cls: `${serif} text-center` },
  C25: { v: "Net Cash Outflows", cls: `${sans} text-center` },
  F23: { v: "9 % of liabilities", cls: sans, span: 2 },
  F24: { v: "13% of assets", cls: sans, span: 2 },
  F25: { v: "Threshold = 75% of cash outflows", cls: sans, span: 3 },
};
for (const [row, category, ratio] of ratios) {
  if (category) cells[`A${row}`] = { v: category, cls: serif };
  cells[`B${row}`] = { v: ratio, cls: serif };
  cells[`E${row}`] = { v: "#DIV/0!", cls: `${serif} text-center` };
}

function rowHeight(r: number) {
  if (r === 6 || r === 21 || r === 25) return "h-7";
  if (r === 7) return "h-9";
  if (r >= 8 && r <= 19) return "h-11";
  if (r === 20) return "h-8";
  if (r >= 22 && r <= 24) return "h-[34px]";
  return "h-[26px]";
}

const sectionEnds = [6, 7, 10, 11, 12, 13, 15, 16, 19];

function borders(r: number, col: string) {
  const inMain = "ABCDE".includes(col);
  const bottom =
    (inMain && (col === "A" ? sectionEnds.includes(r) : r >= 6 && r <= 19)) ||
    ("DE".includes(col) && r >= 21 && r <= 25);
  const right = (inMain && r >= 7 && r <= 19) || ("CDE".includes(col) && r >= 22 && r <= 25);
  return `${bottom ? "border-b-4 border-b-black" : "border-b-2 border-b-[#c9c9c9]"} ${
    right ? "border-r-4 border-r-black" : "border-r-2 border-r-[#c9c9c9]"
  }`;
}

function Row({ r }: { r: number }) {
  const tds: React.ReactNode[] = [];
  for (let i = 0; i < columns.length; ) {
    const col = columns[i][0];
    const cell = cells[`${col}${r}`];
    const span = cell?.span ?? 1;
    const flagged = cell?.v === "#DIV/0!";
    const selected = col === "E" && r === 35;
    tds.push(
      <td
        key={col}
        colSpan={span}
        className={`relative pr-0.5 pl-1 whitespace-pre text-black ${borders(r, col)} ${cell?.cls ?? ""}`}
      >
        {cell?.v}
        {flagged && (
          <span className="absolute top-0 left-0">
            <Svg w={13} h={12}>
              <path d="M0 0 H13 L0 12 Z" fill="#1b7300" />
            </Svg>
          </span>
        )}
        {selected && (
          <span className="absolute -inset-1 z-10 border-4 border-[#226236]">
            <span className="absolute -right-1.5 -bottom-1.5 size-3 border-t-2 border-l-2 border-white bg-[#226236]" />
          </span>
        )}
      </td>,
    );
    i += span;
  }
  const active = r === 35;
  return (
    <tr className={rowHeight(r)}>
      <th
        scope="row"
        className={`border-r-2 border-b-2 border-b-[#565656] p-0 text-center align-bottom text-xl leading-6 font-bold ${
          active ? "border-r-[#226236] bg-[#444] text-[#cfe6d6]" : "border-r-[#b3b3b3] bg-[#111] text-white"
        }`}
      >
        {r}
      </th>
      {tds}
    </tr>
  );
}

function Sheet() {
  return (
    <div className="min-h-0 flex-1 overflow-hidden bg-white font-['Liberation_Sans']">
      <table className="w-[3390px] table-fixed border-separate border-spacing-0">
        <colgroup>
          <col className="w-11" />
          {columns.map(([c, w]) => (
            <col key={c} className={w} />
          ))}
        </colgroup>
        <thead>
          <tr className="h-11">
            <th aria-label="Select all" className="border-r-2 border-b-2 border-[#b3b3b3] bg-[#111] p-0">
              <span className="flex justify-end pt-1 pr-1">
                <Svg w={30} h={30}>
                  <path d="M30 0 V30 H0 Z" fill="#454545" />
                </Svg>
              </span>
            </th>
            {columns.map(([c]) => (
              <th
                key={c}
                scope="col"
                className={`border-r-2 p-0 text-xl leading-6 font-bold text-white ${
                  c === "E"
                    ? "border-b-4 border-r-[#444] border-b-[#226236] bg-[#444]"
                    : "border-b-2 border-r-[#444] border-b-[#b3b3b3] bg-[#111]"
                }`}
              >
                {c}
              </th>
            ))}
          </tr>
        </thead>
        <tbody>
          {Array.from({ length: 51 }, (_, i) => (
            <Row key={i} r={i + 1} />
          ))}
        </tbody>
      </table>
    </div>
  );
}

/* ---------- sheet tabs and status bar ---------- */

function SheetTabs() {
  const idle = "w-[159px] border-r-2 border-[#4a4a4a] bg-[#1a1a1a] pb-1 text-[#6f6f6f]";
  return (
    <div className="flex h-[52px] shrink-0 border-t-2 border-[#565656] bg-[#262626] text-[23px] font-medium">
      <div className="flex w-[118px] items-center gap-[30px] border-r-2 border-[#4a4a4a] pl-7">
        <button aria-label="Previous sheet">
          <Svg w={15} h={20}>
            <path d="M15 0 V20 L0 10 Z" fill="#636363" />
          </Svg>
        </button>
        <button aria-label="Next sheet">
          <Svg w={15} h={20}>
            <path d="M0 0 V20 L15 10 Z" fill="#636363" />
          </Svg>
        </button>
      </div>
      <button className={idle}>BS</button>
      <button className={idle}>RWA</button>
      <button className="-mt-0.5 mb-1.5 w-[157px] rounded-b-md border-b-2 border-[#565656] bg-white pt-1.5 font-bold text-[#1f7440]">
        Answer
      </button>
      <button className={idle}>IS</button>
      <button aria-label="New sheet" className="flex w-[77px] items-center justify-center border-r-2 border-[#4a4a4a]">
        <Svg w={20} h={20}>
          <path d="M10 0 V20 M0 10 H20" stroke="#b5b5b5" strokeWidth="3.4" />
        </Svg>
      </button>
    </div>
  );
}

function StatusBar() {
  return (
    <footer className="flex h-11 shrink-0 items-center justify-between border-t border-black bg-linear-to-b from-[#3a3a3a] to-[#2c2c2c] text-[23px] text-[#f0f0f0]">
      <div className="flex items-center pl-[47px]">
        <span>Ready</span>
        <button className="ml-10 flex items-center gap-1.5">
          <Svg w={32} h={30}>
            <circle cx="14" cy="4.5" r="3.5" stroke="#f0f0f0" strokeWidth="2" />
            <path d="M14 11 Q8 10 4 6 Q1 5 2 9 Q5 13 8 14 Q8 20 5 27 Q6 30 9 28 L13 19 M14 11 Q20 10 24 6 Q28 6 26 9 L20 13 M15 21 L17 28" stroke="#f0f0f0" strokeWidth="2" strokeLinecap="round" strokeLinejoin="round" />
            <path d="M21 17 Q22 14 25 14 Q29 15 28 18 Q25 21 25 24 M25 27 V29.500" stroke="#f0f0f0" strokeWidth="2.2" />
          </Svg>
          Accessibility: Unavailable
        </button>
      </div>
      <div className="flex h-full items-center pr-12">
        <button aria-label="Normal view" className="flex h-full w-[74px] items-center justify-center bg-[#4b4b4b]">
          <Svg w={26} h={26}>
            <path d="M1 1 H25 V25 H1 Z M9 1 V25 M17 1 V25 M1 9 H25 M1 17 H25" stroke="#fff" strokeWidth="2" />
          </Svg>
        </button>
        <button aria-label="Page layout view" className="flex h-full w-[70px] items-center justify-center">
          <Svg w={28} h={26}>
            <path d="M1 1 H27 V25 H1 Z M7 5 H21 V21 H7 Z M10 9 H18 M10 13 H18 M10 17 H18" stroke="#fff" strokeWidth="2" />
          </Svg>
        </button>
        <button aria-label="Page break view" className="flex h-full w-[72px] items-center justify-center">
          <Svg w={28} h={26}>
            <path d="M1 1 H27 V25 H1 Z M10 1 V14 M1 15 H18 V1" stroke="#fff" strokeWidth="2" />
          </Svg>
        </button>
        <button aria-label="Zoom out" className="ml-4">
          <Svg w={16} h={16}>
            <path d="M0 8 H16" stroke="#fff" strokeWidth="4" />
          </Svg>
        </button>
        <input
          type="range"
          aria-label="Zoom"
          min={0}
          max={100}
          defaultValue={50}
          className="mx-3.5 h-2 w-[200px] appearance-none rounded-full bg-[#6a6a6a] [&::-webkit-slider-thumb]:size-8 [&::-webkit-slider-thumb]:appearance-none [&::-webkit-slider-thumb]:rounded-full [&::-webkit-slider-thumb]:bg-[#9b9b9b]"
        />
        <button aria-label="Zoom in">
          <Svg w={16} h={16}>
            <path d="M0 8 H16 M8 0 V16" stroke="#fff" strokeWidth="4" />
          </Svg>
        </button>
        <span className="ml-9">100%</span>
      </div>
    </footer>
  );
}

export default function App() {
  return (
    <div className="flex h-screen flex-col bg-[linear-gradient(to_bottom,transparent_70px,#0b1a26_70px),linear-gradient(to_right,#86c8ff,#a6dfff)] font-['Inter',sans-serif]">
      <MenuBar />
      <main className="mt-0.5 flex min-h-0 flex-1 flex-col overflow-hidden rounded-[20px] border-2 border-[#5a5a5a] bg-[#1e1e1e]">
        <TitleBar />
        <RibbonTabs />
        <Ribbon />
        <FormulaBar />
        <div className="h-1.5 shrink-0 border-y-2 border-[#8f8f8f] bg-white" />
        <Sheet />
        <SheetTabs />
        <StatusBar />
      </main>
    </div>
  );
}
